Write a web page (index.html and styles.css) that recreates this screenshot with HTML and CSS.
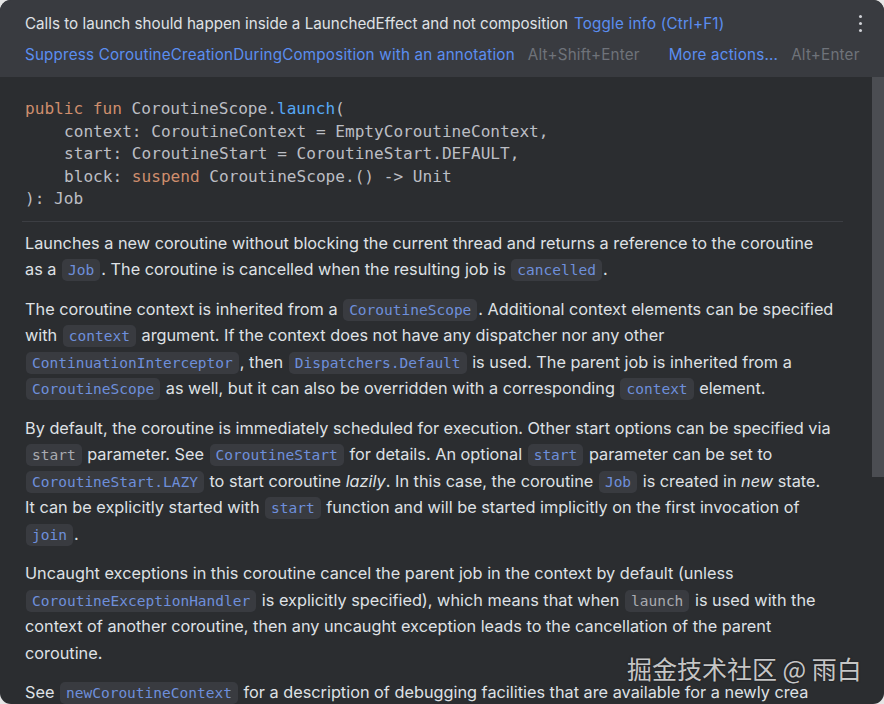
FILE: index.html
```html
<!DOCTYPE html>
<html>
<head>
<meta charset="utf-8">
<link rel="stylesheet" href="styles.css">
</head>
<body>
<div class="popup">
  <div class="header">
    <div class="hrow">
      <span class="msg">Calls to launch should happen inside a LaunchedEffect and not composition</span>
      <span class="link">Toggle info (Ctrl+F1)</span>
      <span class="menu"><i></i><i></i><i></i></span>
    </div>
    <div class="hrow">
      <span class="link">Suppress CoroutineCreationDuringComposition with an annotation</span>
      <span class="key">Alt+Shift+Enter</span>
      <span class="link more">More actions...</span>
      <span class="key">Alt+Enter</span>
    </div>
  </div>
  <div class="body">
    <div class="content">
      <div class="sig">
        <div class="ln"><span class="kw">public fun</span> CoroutineScope.<span class="fn">launch</span>(</div>
        <div class="ln ind">context: CoroutineContext = EmptyCoroutineContext,</div>
        <div class="ln ind">start: CoroutineStart = CoroutineStart.DEFAULT,</div>
        <div class="ln ind">block: <span class="kw">suspend</span> CoroutineScope.() -&gt; Unit</div>
        <div class="ln">): Job</div>
      </div>
      <div class="sep"></div>
      <p>Launches a new coroutine without blocking the current thread and returns a reference to the coroutine<br>as a <code class="lk">Job</code>. The coroutine is cancelled when the resulting job is <code class="lk">cancelled</code>.</p>
      <p>The coroutine context is inherited from a <code class="lk">CoroutineScope</code>. Additional context elements can be specified<br>with <code class="lk">context</code> argument. If the context does not have any dispatcher nor any other<br><code class="lk">ContinuationInterceptor</code>, then <code class="lk">Dispatchers.Default</code> is used. The parent job is inherited from a<br><code class="lk">CoroutineScope</code> as well, but it can also be overridden with a corresponding <code class="lk">context</code> element.</p>
      <p>By default, the coroutine is immediately scheduled for execution. Other start options can be specified via<br><code>start</code> parameter. See <code class="lk">CoroutineStart</code> for details. An optional <code class="lk">start</code> parameter can be set to<br><code class="lk">CoroutineStart.LAZY</code> to start coroutine <em>lazily</em>. In this case, the coroutine <code class="lk">Job</code> is created in <em>new</em> state.<br>It can be explicitly started with <code class="lk">start</code> function and will be started implicitly on the first invocation of<br><code class="lk">join</code>.</p>
      <p>Uncaught exceptions in this coroutine cancel the parent job in the context by default (unless<br><code class="lk">CoroutineExceptionHandler</code> is explicitly specified), which means that when <code>launch</code> is used with the<br>context of another coroutine, then any uncaught exception leads to the cancellation of the parent<br>coroutine.</p>
      <p class="last">See <code class="lk">newCoroutineContext</code> for a description of debugging facilities that are available for a newly crea</p>
    </div>
    <div class="scroll"><div class="thumb"></div></div>
  </div>
  <div class="mark">掘金技术社区 @ 雨白</div>
</div>
</body>
</html>
```

FILE: styles.css
```css
html, body {
  margin: 0;
  padding: 0;
  background: #e6e6e6;
}
.popup {
  position: relative;
  width: 884px;
  height: 704px;
  background: #2b2d30;
  border-radius: 11px;
  overflow: hidden;
  display: flex;
  flex-direction: column;
  font-family: "Inter", "Noto Sans", sans-serif;
  color: #dfe1e5;
}
.header {
  background: #393b40;
  height: 77px;
  box-sizing: border-box;
  padding: 8px 0 0 25px;
  display: flex;
  flex-direction: column;
  font-size: 15.2px;
}
.hrow {
  display: flex;
  align-items: center;
  height: 31px;
  white-space: nowrap;
}
.msg { color: #dfe1e5; margin-right: 6px; }
.link { color: #5b8ef0; letter-spacing: 0.2px; }
.key { color: #6f737a; margin-left: 13px; letter-spacing: 0.2px; }
.more { margin-left: 29px; }
.menu {
  margin-left: auto;
  margin-right: 22px;
  display: flex;
  flex-direction: column;
  gap: 4px;
  align-self: center;
}
.menu i {
  display: block;
  width: 3px;
  height: 3px;
  border-radius: 50%;
  background: #cfd1d6;
}
.body {
  flex: 1;
  display: flex;
  min-height: 0;
}
.content {
  flex: 1;
  padding: 21px 0 0 25px;
  overflow: hidden;
}
.sig {
  font-family: "DejaVu Sans Mono", monospace;
  font-size: 16.1px;
  line-height: 22.5px;
  color: #bcbec4;
}
.ln { white-space: pre; }
.ind { padding-left: 39px; }
.kw { color: #cf8e6d; }
.fn { color: #56a8f5; }
.sep {
  height: 1px;
  background: #3c3e43;
  margin: 10px 29px 8px -3px;
}
p {
  margin: 0 0 13px 0;
  font-size: 16.3px;
  line-height: 26.5px;
  white-space: nowrap;
}
code {
  font-family: "DejaVu Sans Mono", monospace;
  font-size: 14.5px;
  line-height: 1;
  background: #393b40;
  color: #a9abb0;
  border-radius: 5px;
  padding: 3px 6px 3px;
  margin: 0 1px;
}
code.lk { color: #6e8fdb; }
em { font-style: italic; }
.scroll {
  width: 12px;
  flex: none;
}
.thumb {
  width: 12px;
  height: 400px;
  background: #4b4d52;
}
.mark {
  position: absolute;
  left: 627px;
  top: 650px;
  font-family: "Noto Sans CJK SC", sans-serif;
  font-size: 25px;
  color: rgba(230, 230, 230, 0.85);
  text-shadow: 0 0 2px rgba(0,0,0,0.5);
  white-space: nowrap;
}
```
